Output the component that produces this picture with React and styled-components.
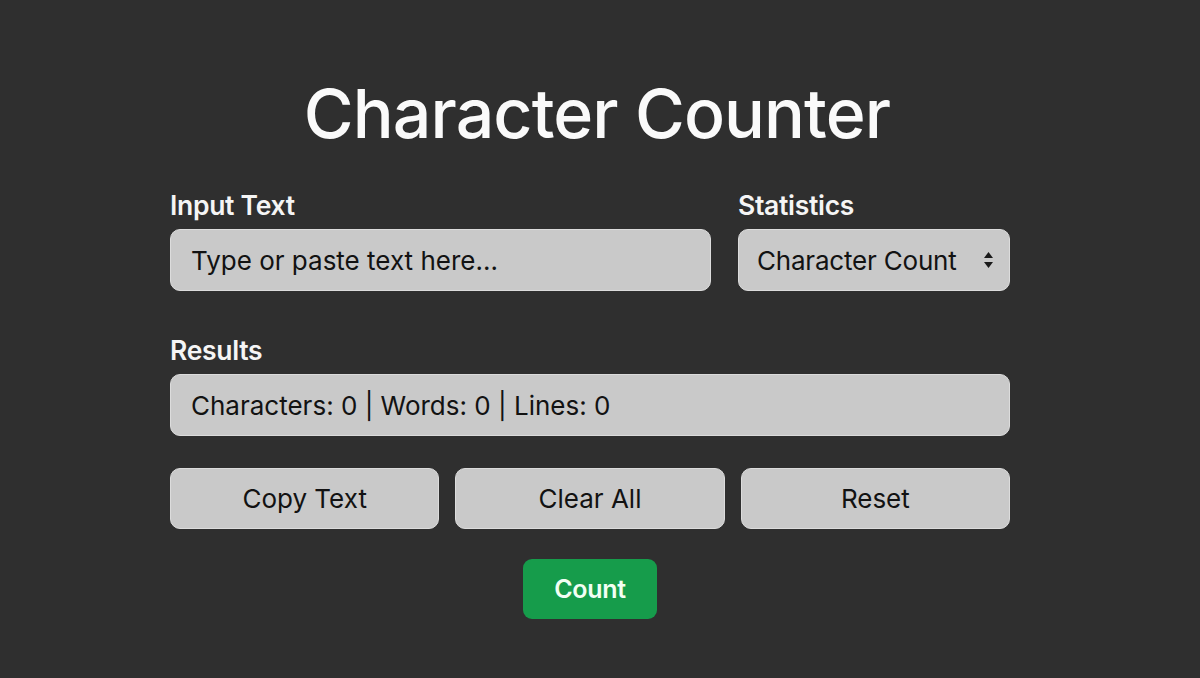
import React, { useState } from 'react'
import styled, { createGlobalStyle } from 'styled-components'

const GlobalStyle = createGlobalStyle`
  html, body {
    margin: 0;
    padding: 0;
    background: #2f2f2f;
    font-family: Inter, 'Noto Sans', sans-serif;
  }
`

const Page = styled.main`
  width: 1200px;
  height: 678px;
  box-sizing: border-box;
  padding: 70px 20px 0 0;
  display: flex;
  flex-direction: column;
  align-items: center;
`

const Title = styled.h1`
  margin: 0 0 33px 14px;
  font-size: 68px;
  font-weight: 500;
  line-height: 86px;
  color: #fafafa;
  letter-spacing: -0.9px;
`

const Panel = styled.section`
  width: 840px;
  display: flex;
  flex-direction: column;
`

const TopRow = styled.div`
  display: grid;
  grid-template-columns: 1fr 272px;
  column-gap: 27px;
`

const Field = styled.div`
  display: flex;
  flex-direction: column;
  margin-bottom: ${(p) => p.$gap || 0}px;
`

const Label = styled.label`
  font-size: 26.5px;
  font-weight: 600;
  color: #f5f5f5;
  line-height: 32px;
  margin-bottom: 8px;
  letter-spacing: -0.3px;
`

const boxStyles = `
  box-sizing: border-box;
  height: 62px;
  border: 1px solid #dcdcdc;
  border-radius: 10px;
  background: #c9c9c9;
  font-family: Inter, 'Noto Sans', sans-serif;
  font-size: 26px;
  color: #121212;
`

const TextInput = styled.input`
  ${boxStyles}
  padding: 0 20px;
  outline: none;
  &::placeholder {
    color: #121212;
    opacity: 1;
  }
`

const SelectWrap = styled.div`
  ${boxStyles}
  display: flex;
  align-items: center;
  justify-content: space-between;
  padding: 0 14px 0 18px;
  letter-spacing: -0.2px;
`

const Chevrons = styled.svg`
  width: 13px;
  height: 22px;
`

const ResultBox = styled.output`
  ${boxStyles}
  display: flex;
  align-items: center;
  padding: 0 20px;
  height: 62px;
`

const ButtonRow = styled.div`
  display: grid;
  grid-template-columns: repeat(3, 1fr);
  column-gap: 16px;
  margin-top: 32px;
`

const Button = styled.button`
  ${boxStyles}
  height: 61px;
  cursor: pointer;
  padding: 0;
`

const CountButton = styled.button`
  align-self: center;
  margin-top: 30px;
  width: 134px;
  height: 60px;
  border: none;
  border-radius: 9px;
  background: #169c4b;
  color: #f2fff4;
  font-family: Inter, 'Noto Sans', sans-serif;
  font-size: 25px;
  font-weight: 600;
  letter-spacing: -0.3px;
  cursor: pointer;
`

const App = () => {
  const [text, setText] = useState('')
  const chars = text.length
  const words = text.trim() ? text.trim().split(/\s+/).length : 0
  const lines = text ? text.split('\n').length : 0

  return (
    <>
      <GlobalStyle />
      <Page>
        <Title>Character Counter</Title>
        <Panel>
          <TopRow>
            <Field $gap={43}>
              <Label>Input Text</Label>
              <TextInput
                placeholder="Type or paste text here..."
                value={text}
                onChange={(e) => setText(e.target.value)}
              />
            </Field>
            <Field>
              <Label>Statistics</Label>
              <SelectWrap>
                <span>Character Count</span>
                <Chevrons viewBox="0 0 13 22">
                  <path d="M6.5 3 L11 9 H2 Z" fill="#1a1a1a" />
                  <path d="M6.5 19 L11 13 H2 Z" fill="#1a1a1a" />
                </Chevrons>
              </SelectWrap>
            </Field>
          </TopRow>
          <Field>
            <Label>Results</Label>
            <ResultBox>
              Characters: {chars} | Words: {words} | Lines: {lines}
            </ResultBox>
          </Field>
          <ButtonRow>
            <Button onClick={() => navigator.clipboard?.writeText(text)}>Copy Text</Button>
            <Button onClick={() => setText('')}>Clear All</Button>
            <Button onClick={() => setText('')}>Reset</Button>
          </ButtonRow>
          <CountButton>Count</CountButton>
        </Panel>
      </Page>
    </>
  )
}

export default App
